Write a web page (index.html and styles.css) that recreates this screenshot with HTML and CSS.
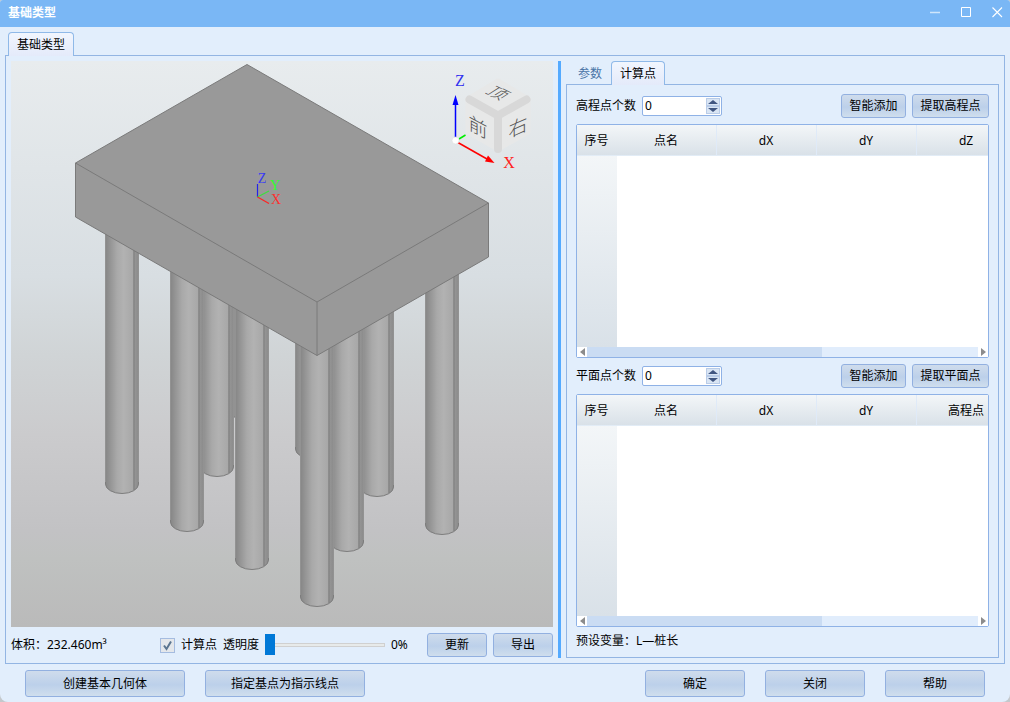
FILE: index.html
```html
<!DOCTYPE html>
<html lang="zh-CN">
<head>
<meta charset="utf-8">
<title>基础类型</title>
<link rel="stylesheet" href="styles.css">
</head>
<body>
<div class="window">
  <header class="titlebar">
    <h1 class="title">基础类型</h1>
    <div class="window-controls">
      <button class="control" type="button" aria-label="最小化"><svg width="11" height="11" viewBox="0 0 11 11"><path d="M0 5.5h10" stroke="#cfe5fb" stroke-width="1.6"/></svg></button>
      <button class="control" type="button" aria-label="最大化"><svg width="11" height="11" viewBox="0 0 11 11"><path d="M.5.5h9v9h-9z" fill="none" stroke="#fff"/></svg></button>
      <button class="control" type="button" aria-label="关闭窗口"><svg width="11" height="11" viewBox="0 0 11 11"><path d="M.5.5l9.5 9.5M10 .5L.5 10" stroke="#fff" stroke-width="1.1"/></svg></button>
    </div>
  </header>

  <nav class="tabs tabs-outer" role="tablist">
    <button class="tab tab-active" type="button" role="tab" aria-selected="true">基础类型</button>
  </nav>

  <main class="frame">
    <section class="left">
      <div class="viewport">
        <svg class="scene" viewBox="11 61 542 566" preserveAspectRatio="xMidYMid meet">
          <defs>
            <linearGradient id="pileFill" x1="0" x2="1" y1="0" y2="0">
              <stop offset="0" stop-color="#868686"/>
              <stop offset=".12" stop-color="#929292"/>
              <stop offset=".35" stop-color="#a9a9a9"/>
              <stop offset=".55" stop-color="#b2b2b2"/>
              <stop offset=".82" stop-color="#a8a8a8"/>
              <stop offset=".86" stop-color="#979797"/>
              <stop offset="1" stop-color="#8b8b8b"/>
            </linearGradient>
            <g id="pile">
              <path d="M-16.500-290V-9A16.500 9.500 0 0 0 16.500-9V-290z" fill="url(#pileFill)"/>
              <path d="M-16.500-290V-9M16.500-290V-9" stroke="#929292" fill="none"/>
              <path d="M-16.500-11V-9A16.500 9.500 0 0 0 16.500-9V-11" fill="none" stroke="#7d7d7d"/>
              <path d="M12-290V-3" stroke="#7c7c7c"/>
            </g>
          </defs>
          <use href="#pile" x="247" y="420"/>
          <use href="#pile" x="312" y="458"/>
          <use href="#pile" x="377" y="496"/>
          <use href="#pile" x="442" y="534"/>
          <use href="#pile" x="217" y="476"/>
          <use href="#pile" x="347" y="551"/>
          <use href="#pile" x="122" y="493"/>
          <use href="#pile" x="187" y="531"/>
          <use href="#pile" x="252" y="569"/>
          <use href="#pile" x="317" y="606"/>
          <g stroke="#7a7a7a" stroke-linejoin="round">
            <path d="M247 64.500L75.500 163v54L317 355.500 488.500 257v-54z" fill="#999"/>
            <path d="M75.500 163L317 302l171.500-99M317 302v53.500" fill="none"/>
          </g>

          <g fill="none" stroke-width="1.200">
            <path d="M257.500 197V184" stroke="#2323e8"/>
            <path d="M257.500 197L269 191" stroke="#3be03b"/>
            <path d="M257.500 197L269 203.500" stroke="#f22"/>
          </g>
          <g class="axis-small">
            <text x="262" y="183" fill="#3a3af5">Z</text>
            <text x="275" y="190" fill="#2cff2c">Y</text>
            <text x="276" y="204" fill="#ff3030">X</text>
          </g>

          <g stroke-linejoin="round" stroke="#e7e8e8" stroke-width="5" fill="#e7e8e8">
            <path d="M498 81L528 99 498 114 468 99z"/>
            <path d="M468 100L498 116V149L468 132z"/>
            <path d="M528 100L498 116V149L528 132z"/>
          </g>
          <path d="M469.500 99.500L498 115.500 526.500 99.500M498 115.500V149" fill="none" stroke="#d8d8d8" stroke-width="8" stroke-linecap="round" stroke-linejoin="round"/>
          <g class="cube-face">
            <text transform="matrix(.87 .42 -.78 .5 498 93)" y="7">顶</text>
            <text transform="translate(478 127) skewY(28)" y="7">前</text>
            <text transform="translate(518 127) skewY(-24)" y="7">右</text>
          </g>

          <path d="M455.500 138V102" stroke="#00f" stroke-width="1.500"/>
          <path d="M455.500 95l3 10h-6z" fill="#00f"/>
          <path d="M459 139L465.500 135" stroke="#0e0" stroke-width="1.500"/>
          <path d="M457 142L487 159" stroke="#f00" stroke-width="1.500"/>
          <path d="M494.500 163l-9.500-1.500 3-6z" fill="#f00"/>
          <circle cx="455.500" cy="140.500" r="3.500" fill="#fff" stroke="#ddd" stroke-width=".6"/>
          <g class="axis">
            <text x="460" y="86" fill="#3333ef">Z</text>
            <text x="509" y="168" fill="#f22">X</text>
          </g>
        </svg>
      </div>
      <div class="toolbar">
        <span class="volume">体积：232.460m³</span>
        <label class="check"><input class="checkbox" type="checkbox" checked>计算点</label>
        <label for="opacity">透明度</label>
        <input class="slider" id="opacity" type="range" min="0" max="100" value="0">
        <output class="percent" for="opacity">0%</output>
        <button class="btn btn-small" type="button">更新</button>
        <button class="btn btn-small" type="button">导出</button>
      </div>
    </section>

    <div class="splitter"></div>

    <section class="right">
      <nav class="tabs" role="tablist">
        <button class="tab" type="button" role="tab" aria-selected="false">参数</button>
        <button class="tab tab-active" type="button" role="tab" aria-selected="true">计算点</button>
      </nav>
      <div class="pane">
        <div class="row">
          <label for="elevation">高程点个数</label>
          <div class="spin">
            <input class="spin-input" id="elevation" type="number" value="0">
            <div class="spin-buttons">
              <button class="spin-btn" type="button" aria-label="增加"><svg width="10" height="4" viewBox="0 0 10 4"><path d="M0 4L5 0l5 4z"/></svg></button>
              <button class="spin-btn" type="button" aria-label="减少"><svg width="10" height="4" viewBox="0 0 10 4"><path d="M0 0L5 4l5-4z"/></svg></button>
            </div>
          </div>
          <span class="spacer"></span>
          <button class="btn btn-add" type="button">智能添加</button>
          <button class="btn btn-pick" type="button">提取高程点</button>
        </div>
        <div class="grid">
          <div class="scroller">
            <table class="table">
              <thead><tr><th class="index">序号</th><th>点名</th><th>dX</th><th>dY</th><th>dZ</th></tr></thead>
              <tbody><tr><td class="index"></td><td></td><td></td><td></td><td></td></tr></tbody>
            </table>
          </div>
          <div class="scrollbar">
            <button class="arrow" type="button" aria-label="向左滚动"><svg width="5" height="8" viewBox="0 0 5 8"><path d="M5 0v8L0 4z"/></svg></button>
            <div class="track"><div class="thumb"></div></div>
            <button class="arrow" type="button" aria-label="向右滚动"><svg width="5" height="8" viewBox="0 0 5 8"><path d="M0 0v8l5-4z"/></svg></button>
          </div>
        </div>
        <div class="row">
          <label for="plane">平面点个数</label>
          <div class="spin">
            <input class="spin-input" id="plane" type="number" value="0">
            <div class="spin-buttons">
              <button class="spin-btn" type="button" aria-label="增加"><svg width="10" height="4" viewBox="0 0 10 4"><path d="M0 4L5 0l5 4z"/></svg></button>
              <button class="spin-btn" type="button" aria-label="减少"><svg width="10" height="4" viewBox="0 0 10 4"><path d="M0 0L5 4l5-4z"/></svg></button>
            </div>
          </div>
          <span class="spacer"></span>
          <button class="btn btn-add" type="button">智能添加</button>
          <button class="btn btn-pick" type="button">提取平面点</button>
        </div>
        <div class="grid">
          <div class="scroller">
            <table class="table">
              <thead><tr><th class="index">序号</th><th>点名</th><th>dX</th><th>dY</th><th>高程点</th></tr></thead>
              <tbody><tr><td class="index"></td><td></td><td></td><td></td><td></td></tr></tbody>
            </table>
          </div>
          <div class="scrollbar">
            <button class="arrow" type="button" aria-label="向左滚动"><svg width="5" height="8" viewBox="0 0 5 8"><path d="M5 0v8L0 4z"/></svg></button>
            <div class="track"><div class="thumb"></div></div>
            <button class="arrow" type="button" aria-label="向右滚动"><svg width="5" height="8" viewBox="0 0 5 8"><path d="M0 0v8l5-4z"/></svg></button>
          </div>
        </div>
        <p class="note">预设变量：L—桩长</p>
      </div>
    </section>
  </main>

  <footer class="footer">
    <button class="btn btn-wide" type="button">创建基本几何体</button>
    <button class="btn btn-wide" type="button">指定基点为指示线点</button>
    <span class="spacer"></span>
    <button class="btn btn-dialog" type="button">确定</button>
    <button class="btn btn-dialog" type="button">关闭</button>
    <button class="btn btn-dialog" type="button">帮助</button>
  </footer>
</div>
</body>
</html>
```

FILE: styles.css
```css
* { box-sizing: border-box; }

body {
  margin: 0;
  background: #c4c8cc;
  color: #000;
  font: 12px/18px "Noto Sans", "Noto Sans CJK SC", sans-serif;
}

button, input { font: inherit; color: inherit; }
svg { display: block; }

.window {
  display: flex;
  flex-direction: column;
  height: 100vh;
  background: #e2eefc;
  border-radius: 3px 3px 8px 8px;
  overflow: hidden;
}

.titlebar {
  display: flex;
  justify-content: space-between;
  align-items: center;
  height: 27px;
  padding: 0 7px 2px 8px;
  background: #7ab7f5;
}
.title { margin: 0; font-size: 12px; font-weight: 700; color: #fff; }
.window-controls { display: flex; gap: 20px; }
.control { padding: 0; border: 0; background: none; }

.tabs { display: flex; align-items: flex-end; height: 24px; margin-bottom: -1px; }
.tabs-outer { margin: 5px 8px -1px; }
.tab {
  height: 24px;
  padding: 0 8px;
  border: 1px solid transparent;
  border-bottom: 0;
  background: none;
  color: #4a74a6;
}
.tab-active {
  position: relative;
  border-color: #8fb9e8;
  border-radius: 4px 4px 0 0;
  background: linear-gradient(#f1f6fe, #e4eafa);
  color: #000;
}

.frame {
  flex: 1;
  min-height: 0;
  display: grid;
  grid-template-columns: minmax(0, 542fr) 3px minmax(0, 433fr);
  gap: 5px;
  margin: 0 5px;
  padding: 5px;
  border: 1px solid #93b5e3;
}

.left { display: flex; flex-direction: column; min-height: 0; }
.viewport {
  flex: 1;
  min-height: 0;
  background: linear-gradient(#e8ecee 0%, #d8dee2 38%, #d0d4d6 52%, #cbcbcd 66%, #c2c2c4 83%, #bfc1c0 88%, #bababa 100%);
}
.scene { width: 100%; height: 100%; }
.axis, .axis-small { font-family: "Liberation Serif", serif; text-anchor: middle; }
.axis { font-size: 16px; }
.axis-small { font-size: 14px; }
.cube-face {
  font-family: "Noto Sans CJK SC", sans-serif;
  font-size: 19px;
  font-weight: 300;
  text-anchor: middle;
  fill: #555;
}

.toolbar { display: flex; align-items: center; gap: 6px; padding: 6px 0 1px; }
.volume { flex: 1; }
.check { display: flex; align-items: center; gap: 6px; }
.checkbox {
  appearance: none;
  width: 15px;
  height: 15px;
  margin: 0;
  border: 1px solid #a5bce0;
  background: #e4e7eb;
}
.checkbox:checked {
  background: #e4e7eb url("data:image/svg+xml,%3Csvg xmlns='http://www.w3.org/2000/svg' viewBox='0 0 13 13'%3E%3Cpath d='M3 6.500l2.500 3.500L10 2.500' fill='none' stroke='%235b7590' stroke-width='2'/%3E%3C/svg%3E");
}
.slider { appearance: none; width: 120px; height: 21px; margin: 0; background: none; }
.slider::-webkit-slider-runnable-track { height: 4px; border: 1px solid #d0d0d0; background: #e7eaea; }
.slider::-webkit-slider-thumb {
  appearance: none;
  width: 10px;
  height: 21px;
  margin-top: -10px;
  margin-left: -1px;
  background: #0078d7;
}
.percent { width: 30px; }

.splitter { background: #54aaff; }

.right { display: flex; flex-direction: column; min-height: 0; }
.right .tabs { padding-left: 3px; }
.pane {
  flex: 1;
  min-height: 0;
  display: flex;
  flex-direction: column;
  gap: 6px;
  padding: 9px 9px 6px;
  border: 1px solid #93b5e3;
}
.row { display: flex; align-items: center; gap: 6px; }
.spacer { flex: 1; }

.btn {
  height: 24px;
  padding: 0;
  border: 1px solid #92b0e0;
  border-radius: 3px;
  background: linear-gradient(#cfdcec, #bcd0ea 55%, #cfdeed);
  white-space: nowrap;
}
.btn-small { width: 60px; }
.btn-add { width: 65px; }
.btn-pick { width: 77px; }
.footer { display: flex; gap: 20px; padding: 6px 25px 5px; }
.footer .btn { height: 27px; }
.btn-wide { width: 160px; }
.btn-dialog { width: 100px; }

.spin {
  display: flex;
  width: 80px;
  height: 20px;
  padding: 1px;
  border: 1px solid #8fb2e6;
  border-radius: 2px;
  background: #fff;
}
.spin-input {
  flex: 1;
  min-width: 0;
  padding: 0 1px;
  border: 0;
  outline: 0;
  background: none;
  appearance: textfield;
}
.spin-input::-webkit-inner-spin-button { appearance: none; margin: 0; }
.spin-buttons { display: flex; flex-direction: column; width: 14px; }
.spin-btn {
  flex: 1;
  display: flex;
  align-items: center;
  justify-content: center;
  padding: 0;
  border: 1px solid #b9cce8;
  background: #d9e5f4;
  fill: #3f5580;
}

.grid {
  flex: 1 1 0;
  min-height: 0;
  display: flex;
  flex-direction: column;
  border: 1px solid #8fb2e6;
  border-radius: 2px;
  background: #fff;
}
.scroller { flex: 1; min-height: 0; overflow: hidden; }
.table { width: 440px; height: 100%; table-layout: fixed; border-collapse: separate; border-spacing: 0; }
.table th {
  width: 100px;
  height: 31px;
  padding: 2px 1px 0 0;
  border-right: 1px solid #dfeaf8;
  border-bottom: 1px solid #e2ecf6;
  background: linear-gradient(#f3f6f8, #d9e1e8);
  font-weight: 400;
}
.table td { padding: 0; }
.table .index { width: 40px; border-right: 0; }
.table td.index { background: linear-gradient(#f3f6f8, #d9e1e8); }

.scrollbar { display: flex; height: 10px; }
.arrow {
  display: flex;
  align-items: center;
  justify-content: center;
  width: 10px;
  padding: 0;
  border: 0;
  background: #fff;
  fill: #8c8c8c;
}
.track { flex: 1; background: #e1edfc; }
.thumb { width: 60%; height: 100%; background: #cadcf3; }

.note { margin: -2px 0 0; line-height: 20px; }
```
